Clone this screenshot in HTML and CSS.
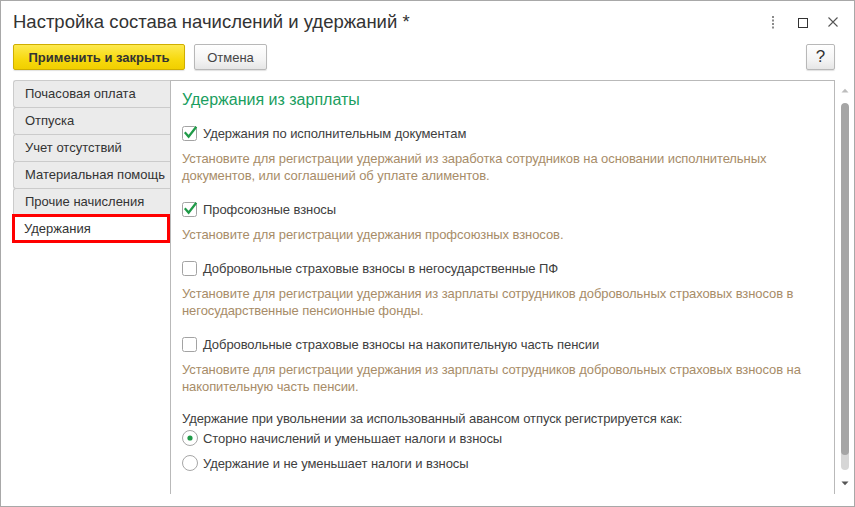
FILE: index.html
```
<!DOCTYPE html>
<html lang="ru">
<head>
<meta charset="utf-8">
<title>Настройка состава начислений и удержаний</title>
<link rel="stylesheet" href="styles.css">
</head>
<body>
<div class="window">
  <header class="titlebar">
    <h1 class="title">Настройка состава начислений и удержаний *</h1>
    <div class="wincontrols">
      <svg class="wc" width="14" height="14" viewBox="0 0 14 14"><rect x="6" y="1" width="2" height="2" fill="#8a8a8a"/><rect x="6" y="4.5" width="2" height="2" fill="#8a8a8a"/><rect x="6" y="8" width="2" height="2" fill="#8a8a8a"/><rect x="6" y="11.5" width="2" height="2" fill="#8a8a8a"/></svg>
      <svg class="wc" width="14" height="14" viewBox="0 0 14 14"><rect x="2.5" y="3.5" width="9" height="9" fill="none" stroke="#333" stroke-width="1"/></svg>
      <svg class="wc" width="14" height="14" viewBox="0 0 14 14"><path d="M2.5 2.5 L11.5 11.5 M11.5 2.5 L2.5 11.5" stroke="#555" stroke-width="1.1" fill="none"/></svg>
    </div>
  </header>
  <div class="toolbar">
    <button class="btn btn-primary">Применить и закрыть</button>
    <button class="btn btn-cancel">Отмена</button>
    <span class="spacer"></span>
    <button class="btn btn-help">?</button>
  </div>
  <div class="main">
    <nav class="tabs">
      <div class="tab tab-first">Почасовая оплата</div>
      <div class="tab">Отпуска</div>
      <div class="tab">Учет отсутствий</div>
      <div class="tab">Материальная помощь</div>
      <div class="tab">Прочие начисления</div>
      <div class="tab tab-active">Удержания</div>
    </nav>
    <section class="panel">
      <h2 class="heading">Удержания из зарплаты</h2>

      <label class="check-row first">
        <svg class="cb" width="16" height="16" viewBox="0 0 16 16"><rect x="0.5" y="1.5" width="14" height="14" rx="2" fill="#fff" stroke="#a3a3a3"/><path d="M3.6 8.2 L6.6 11.6 L13.6 2.6" stroke="#1f9a48" stroke-width="2.3" fill="none" stroke-linecap="square"/></svg>
        <span>Удержания по исполнительным документам</span>
      </label>
      <p class="desc">Установите для регистрации удержаний из заработка сотрудников на основании исполнительных документов, или соглашений об уплате алиментов.</p>

      <label class="check-row">
        <svg class="cb" width="16" height="16" viewBox="0 0 16 16"><rect x="0.5" y="1.5" width="14" height="14" rx="2" fill="#fff" stroke="#a3a3a3"/><path d="M3.6 8.2 L6.6 11.6 L13.6 2.6" stroke="#1f9a48" stroke-width="2.3" fill="none" stroke-linecap="square"/></svg>
        <span>Профсоюзные взносы</span>
      </label>
      <p class="desc">Установите для регистрации удержания профсоюзных взносов.</p>

      <label class="check-row">
        <svg class="cb" width="16" height="16" viewBox="0 0 16 16"><rect x="0.5" y="1.5" width="14" height="14" rx="2" fill="#fff" stroke="#a3a3a3"/></svg>
        <span>Добровольные страховые взносы в негосударственные ПФ</span>
      </label>
      <p class="desc">Установите для регистрации удержания из зарплаты сотрудников добровольных страховых взносов в негосударственные пенсионные фонды.</p>

      <label class="check-row">
        <svg class="cb" width="16" height="16" viewBox="0 0 16 16"><rect x="0.5" y="1.5" width="14" height="14" rx="2" fill="#fff" stroke="#a3a3a3"/></svg>
        <span>Добровольные страховые взносы на накопительную часть пенсии</span>
      </label>
      <p class="desc">Установите для регистрации удержания из зарплаты сотрудников добровольных страховых взносов на накопительную часть пенсии.</p>

      <p class="question">Удержание при увольнении за использованный авансом отпуск регистрируется как:</p>
      <label class="radio-row r1">
        <svg class="rb" width="16" height="16" viewBox="0 0 16 16"><circle cx="8" cy="8" r="7.5" fill="#fff" stroke="#a6a6a6"/><circle cx="8" cy="8" r="2.6" fill="#1f9a48"/></svg>
        <span>Сторно начислений и уменьшает налоги и взносы</span>
      </label>
      <label class="radio-row r2">
        <svg class="rb" width="16" height="16" viewBox="0 0 16 16"><circle cx="8" cy="8" r="7.5" fill="#fff" stroke="#a6a6a6"/></svg>
        <span>Удержание и не уменьшает налоги и взносы</span>
      </label>
    </section>
    <div class="scrollbar">
      <svg class="arrow-up" width="8" height="5" viewBox="0 0 8 5"><path d="M0.5 4.5 L4 0.8 L7.5 4.5 Z" fill="#bdbdbd"/></svg>
      <div class="track"><div class="thumb"></div></div>
      <svg class="arrow-down" width="8" height="5" viewBox="0 0 8 5"><path d="M0.5 0.5 L7.5 0.5 L4 4.2 Z" fill="#555"/></svg>
    </div>
  </div>
</div>
</body>
</html>
```
FILE: styles.css
```
* { box-sizing: border-box; }
html, body { margin: 0; padding: 0; background: #fff; }
body {
  font-family: "Liberation Sans", Arial, sans-serif;
  font-size: 13px;
  color: #333;
}
.window {
  width: 855px;
  height: 507px;
  border: 1px solid #a8a8a8;
  background: #fff;
  display: flex;
  flex-direction: column;
  overflow: hidden;
}
.titlebar {
  display: flex;
  height: 43px;
  padding: 10px 14px 0 12px;
  align-items: flex-start;
}
.title {
  margin: 0;
  font-size: 18.5px;
  line-height: 22px;
  font-weight: normal;
  color: #333;
}
.wincontrols {
  margin-left: auto;
  display: flex;
  gap: 16px;
  padding-top: 4px;
}
.wc { display: block; }
.toolbar {
  display: flex;
  align-items: center;
  gap: 9px;
  height: 26px;
  padding: 0 19px 0 12px;
  margin-bottom: 10px;
}
.spacer { flex: 1; }
.btn {
  height: 26px;
  border: 1px solid #b8b8b8;
  border-radius: 2px;
  background: linear-gradient(#ffffff, #f4f4f4 60%, #e6e6e6);
  font-family: "Liberation Sans", Arial, sans-serif;
  font-size: 13px;
  color: #333;
  padding: 0 14px;
  box-shadow: 0 1px 1px rgba(0,0,0,0.12);
  cursor: default;
}
.btn-primary {
  width: 172px;
  padding: 0;
  font-weight: bold;
  color: #333;
  background: linear-gradient(#fde94f, #f7d90e 60%, #f1cf00);
  border-color: #cfae00;
}
.btn-cancel { width: 73px; padding: 0; color: #444; }
.btn-help { width: 29px; padding: 0; font-size: 17px; }
.main {
  flex: 1;
  display: flex;
  align-items: flex-start;
  padding-left: 12px;
}
.tabs {
  width: 157px;
  display: flex;
  flex-direction: column;
}
.tab {
  height: 28px;
  margin-top: -1px;
  border: 1px solid #cbcbcb;
  border-right: none;
  border-radius: 3px 0 0 3px;
  background: #ebebeb;
  padding-left: 11px;
  line-height: 26px;
  color: #333;
  white-space: nowrap;
}
.tab-first { margin-top: 0; }
.tab-active {
  height: 29px;
  margin-top: -2px;
  margin-left: -1px;
  width: 158px;
  border: 3px solid #ff0000;
  border-radius: 0;
  background: #fff;
  padding-left: 9px;
  line-height: 23px;
}
.panel {
  width: 665px;
  height: 414px;
  border: 1px solid #b9b9b9;
  border-bottom: none;
  padding: 9px 11px 0 11px;
  letter-spacing: -0.08px;
}
.heading {
  margin: 0;
  font-size: 16px;
  line-height: 20px;
  font-weight: normal;
  color: #1a9e60;
  letter-spacing: 0;
}
.check-row, .radio-row {
  display: flex;
  align-items: center;
  height: 20px;
  gap: 5px;
  color: #404040;
}
.check-row { margin-top: 15px; }
.check-row.first { margin-top: 13px; }
.cb, .rb { display: block; flex: none; }
.desc {
  margin: 7px 0 0 0;
  line-height: 17px;
  color: #a78c68;
}
.question {
  margin: 15px 0 0 0;
  line-height: 17px;
  color: #404040;
}
.radio-row.r1 { margin-top: 1px; }
.radio-row.r2 { margin-top: 5px; }
.scrollbar {
  width: 19px;
  height: 414px;
  display: flex;
  flex-direction: column;
  align-items: center;
  padding-left: 1px;
}
.arrow-up { display: block; margin-top: 8px; }
.track {
  width: 8px;
  height: 367px;
  margin-top: 10px;
  border-radius: 4px;
  background: #d6d6d6;
  overflow: hidden;
}
.thumb {
  width: 8px;
  height: 352px;
  border-radius: 4px;
  background: #a5a5a5;
}
.arrow-down { display: block; margin-top: 11px; }
```
